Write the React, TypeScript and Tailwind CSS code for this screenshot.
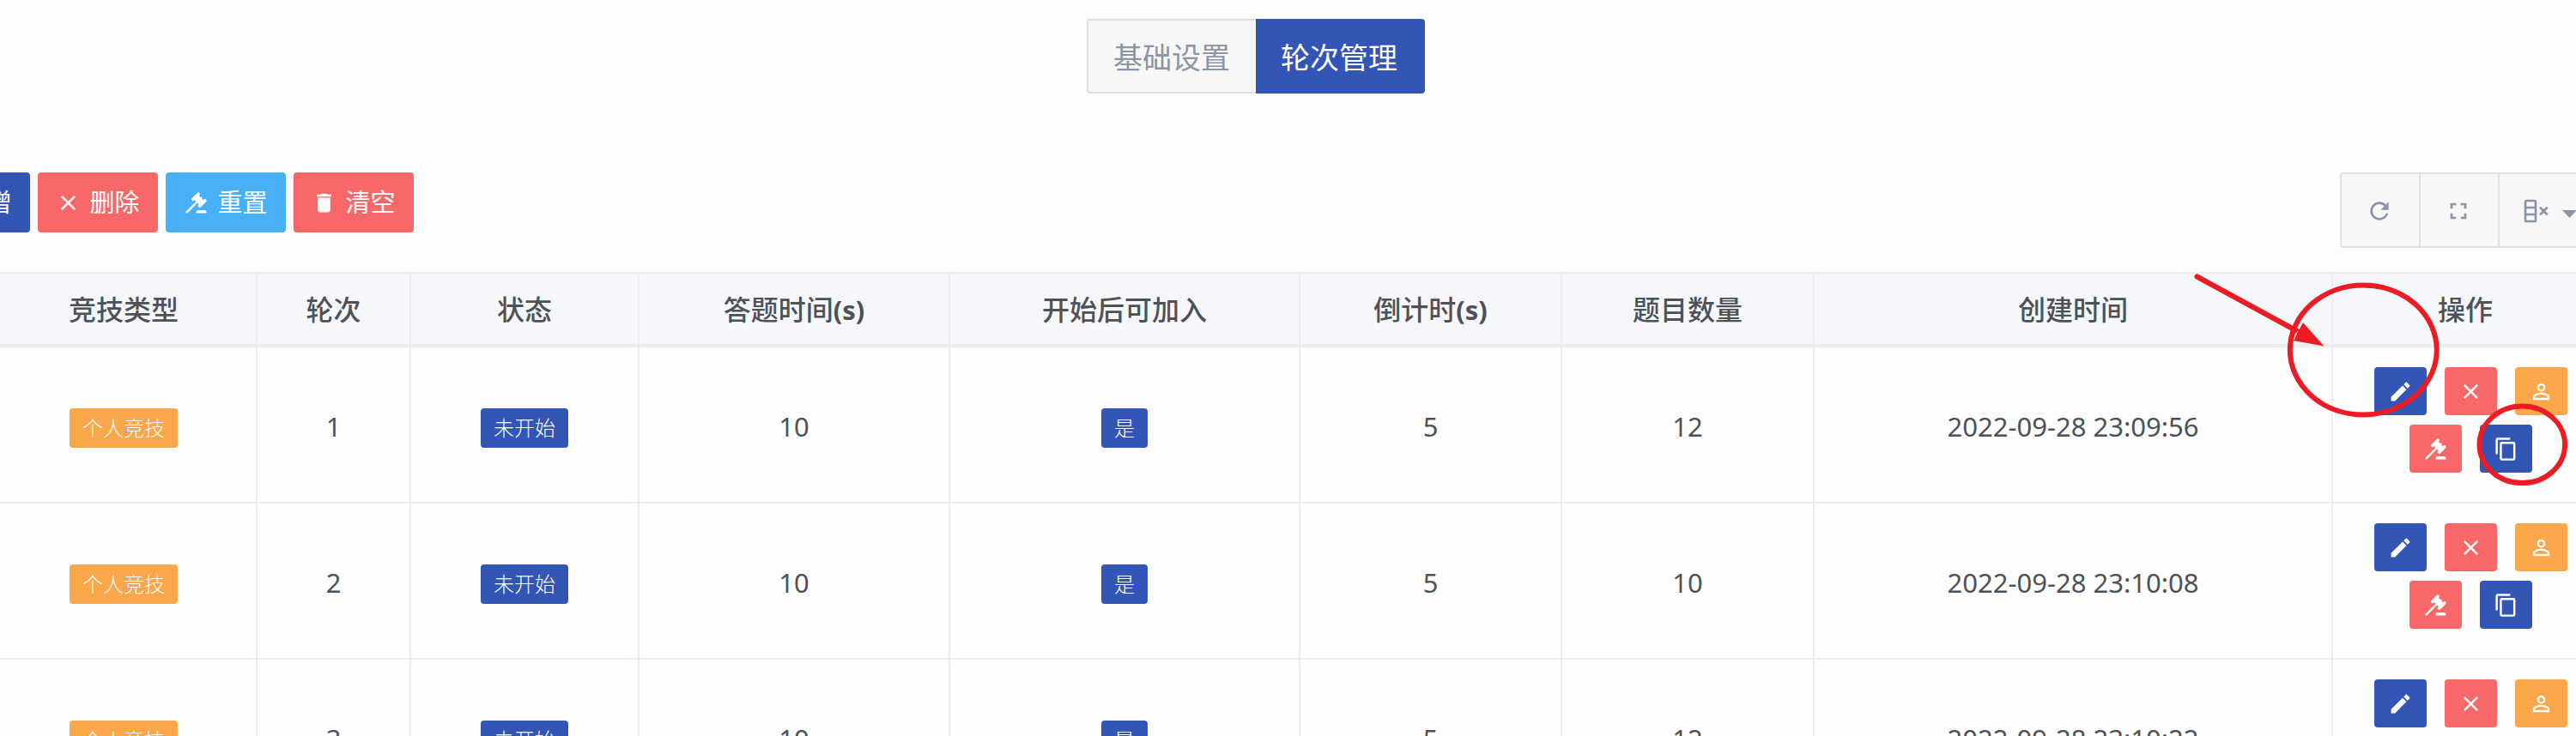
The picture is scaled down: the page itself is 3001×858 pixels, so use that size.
import { useState } from "react";

// icon paths (24x24)
const ICONS = {
  plus: "M19,13H13V19H11V13H5V11H11V5H13V11H19V13Z",
  close:
    "M19,6.41L17.59,5L12,10.59L6.41,5L5,6.41L10.59,12L5,17.59L6.41,19L12,13.41L17.59,19L19,17.59L13.41,12L19,6.41Z",
  gavel:
    "M2.3,20.28L11.9,10.68L10.5,9.26L9.78,9.97C9.39,10.36 8.76,10.36 8.37,9.97L7.66,9.26C7.27,8.87 7.27,8.24 7.66,7.85L13.32,2.19C13.71,1.8 14.34,1.8 14.73,2.19L15.44,2.9C15.83,3.29 15.83,3.92 15.44,4.31L14.73,5L16.15,6.43C16.54,6.04 17.17,6.04 17.56,6.43C17.95,6.82 17.95,7.46 17.56,7.85L18.97,9.26L19.68,8.55C20.07,8.16 20.71,8.16 21.1,8.55L21.8,9.26C22.19,9.65 22.19,10.29 21.8,10.68L16.15,16.33C15.76,16.72 15.12,16.72 14.73,16.33L14.03,15.63C13.63,15.24 13.63,14.6 14.03,14.21L14.73,13.5L13.32,12.09L3.71,21.7C3.32,22.09 2.69,22.09 2.3,21.7C1.91,21.31 1.91,20.67 2.3,20.28M20,19A2,2 0 0,1 22,21V22H12V21A2,2 0 0,1 14,19H20Z",
  trash: "M19,4H15.5L14.5,3H9.5L8.5,4H5V6H19M6,19A2,2 0 0,0 8,21H16A2,2 0 0,0 18,19V7H6V19Z",
  pencil:
    "M20.71,7.04C21.1,6.65 21.1,6 20.71,5.63L18.37,3.29C18,2.9 17.35,2.9 16.96,3.29L15.12,5.12L18.87,8.87M3,17.25V21H6.75L17.81,9.93L14.06,6.18L3,17.25Z",
  account:
    "M12,13C14.67,13 20,14.33 20,17V20H4V17C4,14.33 9.33,13 12,13M12,4A4,4 0 0,1 16,8A4,4 0 0,1 12,12A4,4 0 0,1 8,8A4,4 0 0,1 12,4M12,14.9C9.03,14.9 5.9,16.36 5.9,17V18.1H18.1V17C18.1,16.36 14.97,14.9 12,14.9M12,5.9A2.1,2.1 0 0,0 9.9,8A2.1,2.1 0 0,0 12,10.1A2.1,2.1 0 0,0 14.1,8A2.1,2.1 0 0,0 12,5.9Z",
  copy: "M19,21H8V7H19M19,5H8A2,2 0 0,0 6,7V21A2,2 0 0,0 8,23H19A2,2 0 0,0 21,21V7A2,2 0 0,0 19,5M16,1H4A2,2 0 0,0 2,3V17H4V3H16V1Z",
  refresh:
    "M17.65,6.35C16.2,4.9 14.21,4 12,4A8,8 0 0,0 4,12A8,8 0 0,0 12,20C15.73,20 18.84,17.45 19.73,14H17.65C16.83,16.33 14.61,18 12,18A6,6 0 0,1 6,12A6,6 0 0,1 12,6C13.66,6 15.14,6.69 16.22,7.78L13,11H20V4L17.65,6.35Z",
  fullscreen:
    "M5,5H10V7H7V10H5V5M14,5H19V10H17V7H14V5M17,14H19V19H14V17H17V14M10,17V19H5V14H7V17H10Z",
  columns:
    "M4,2H11A2,2 0 0,1 13,4V20A2,2 0 0,1 11,22H4A2,2 0 0,1 2,20V4A2,2 0 0,1 4,2M4,10V14H11V10H4M4,16V20H11V16H4M4,4V8H11V4H4M17.59,12L15,9.41L16.41,8L19,10.59L21.59,8L23,9.41L20.41,12L23,14.59L21.59,16L19,13.41L16.41,16L15,14.59L17.59,12Z",
};

type IconName = keyof typeof ICONS;

function Icon({ name, className }: { name: IconName; className: string }) {
  return (
    <svg viewBox="0 0 24 24" fill="currentColor" aria-hidden="true" className={className}>
      <path d={ICONS[name]} />
    </svg>
  );
}

const tabs = ["基础设置", "轮次管理"];

const tools: { label: string; icon: IconName; color: string }[] = [
  { label: "新增", icon: "plus", color: "bg-[#3355b5]" },
  { label: "删除", icon: "close", color: "bg-[#f96868]" },
  { label: "重置", icon: "gavel", color: "bg-[#48b0f7]" },
  { label: "清空", icon: "trash", color: "bg-[#f96868]" },
];

const actions: { label: string; icon: IconName; color: string }[] = [
  { label: "编辑", icon: "pencil", color: "bg-[#3355b5]" },
  { label: "删除", icon: "close", color: "bg-[#f96868]" },
  { label: "选手", icon: "account", color: "bg-[#faa64b]" },
  { label: "重置", icon: "gavel", color: "bg-[#f96868]" },
  { label: "复制", icon: "copy", color: "bg-[#3355b5]" },
];

const columns: { title: string; unit?: string; width: string }[] = [
  { title: "竞技类型", width: "w-[310px]" },
  { title: "轮次", width: "w-[179px]" },
  { title: "状态", width: "w-[266px]" },
  { title: "答题时间", unit: "(s)", width: "w-[362px]" },
  { title: "开始后可加入", width: "w-[408px]" },
  { title: "倒计时", unit: "(s)", width: "w-[305px]" },
  { title: "题目数量", width: "w-[294px]" },
  { title: "创建时间", width: "w-[604px]" },
  { title: "操作", width: "w-[308px]" },
];

const rounds = [
  { round: 1, answerTime: 10, countdown: 5, total: 12, createdAt: "2022-09-28 23:09:56" },
  { round: 2, answerTime: 10, countdown: 5, total: 10, createdAt: "2022-09-28 23:10:08" },
  { round: 3, answerTime: 10, countdown: 5, total: 12, createdAt: "2022-09-28 23:10:22" },
];

function Badge({ text, color }: { text: string; color: string }) {
  return (
    <span
      className={`mt-1 inline-block rounded px-[15px] py-[5px] align-middle text-2xl leading-9 font-light text-white ${color}`}
    >
      {text}
    </span>
  );
}

export default function App() {
  const [tab, setTab] = useState(1);

  const cell = "border-r-2 border-b-2 border-[#ebedee] px-0 pt-[3px] pb-0 text-center align-middle";

  return (
    <div className="relative h-screen overflow-hidden bg-[#fdfdfd] pt-[22px] font-['Noto_Sans','Noto_Sans_CJK_SC',sans-serif] text-[31px] leading-10 text-[#4d5259]">
      <div className="-mr-[25px] -ml-[105px]">

        {/* Tabs */}
        <div className="flex justify-center pl-1">
          {tabs.map((name, i) => (
            <button
              key={name}
              onClick={() => setTab(i)}
              className={`h-[87px] w-[197px] border-2 pt-0.5 text-[34px] first:rounded-l first:border-r-0 last:rounded-r last:border-l-0 ${
                tab === i
                  ? "border-[#3355b5] bg-[#3355b5] text-white"
                  : "border-[#e3dedf] bg-[#f7f7f7] text-[#8b95a5]"
              }`}
            >
              {name}
            </button>
          ))}
        </div>

        {/* Toolbar */}
        <div className="mt-[92px] flex items-start justify-between">
          <div className="flex gap-[9px]">
            {tools.map((t) => (
              <button
                key={t.label}
                className={`flex h-[70px] w-[140px] items-center justify-center gap-2.5 rounded text-[29px] text-white ${t.color}`}
              >
                <Icon name={t.icon} className="size-[29px]" />
                {t.label}
              </button>
            ))}
          </div>

          <div className="flex h-[88px] rounded border-2 border-[#e3dedf] bg-[#f7f7f7] text-[#8b95a5]">
            <button aria-label="刷新" className="border-r-2 border-[#e3dedf] pt-0.5 pr-[30px] pl-7">
              <Icon name="refresh" className="size-8" />
            </button>
            <button aria-label="全屏" className="border-r-2 border-[#e3dedf] pt-0.5 pr-[30px] pl-7">
              <Icon name="fullscreen" className="size-8" />
            </button>
            <button aria-label="列" className="flex items-center gap-[15px] pt-0.5 pr-[22px] pl-[26px]">
              <Icon name="columns" className="size-8" />
              <svg viewBox="0 0 17 9" fill="currentColor" aria-hidden="true" className="mt-1.5 h-[9px] w-[17px]">
                <path d="M0,0H17L8.5,9Z" />
              </svg>
            </button>
          </div>
        </div>

        {/* Table */}
        <div className="mt-7 ml-[95px]">
          <table className="w-full table-fixed border-separate border-spacing-0 border-t-2 border-[#ebedee]">
            <thead>
              <tr className="h-[86px] bg-[#f5f7fa]">
                {columns.map((c) => (
                  <th
                    key={c.title}
                    className={`border-r-2 border-b-4 border-[#ebedee] px-0 pt-0.5 pb-0 text-center text-[32px] font-medium last:border-r-0 ${c.width}`}
                  >
                    {c.title}
                    {c.unit && <span className="text-[31px] font-bold">{c.unit}</span>}
                  </th>
                ))}
              </tr>
            </thead>
            <tbody>
              {rounds.map((r) => (
                <tr key={r.round} className="h-[182px]">
                  <td className={cell}>
                    <Badge text="个人竞技" color="bg-[#faa64b]" />
                  </td>
                  <td className={cell}>{r.round}</td>
                  <td className={cell}>
                    <Badge text="未开始" color="bg-[#3355b5]" />
                  </td>
                  <td className={cell}>{r.answerTime}</td>
                  <td className={cell}>
                    <Badge text="是" color="bg-[#3355b5]" />
                  </td>
                  <td className={cell}>{r.countdown}</td>
                  <td className={cell}>{r.total}</td>
                  <td className={cell}>{r.createdAt}</td>
                  <td className="border-b-2 border-[#ebedee] p-0 align-middle">
                    <div className="flex flex-wrap justify-center gap-x-[21px] gap-y-[11px] pb-[11px] pl-3">
                      {actions.map((a) => (
                        <button
                          key={a.label}
                          aria-label={a.label}
                          className={`flex h-14 w-[61px] items-center justify-center rounded text-white ${a.color}`}
                        >
                          <Icon name={a.icon} className="size-[29px]" />
                        </button>
                      ))}
                    </div>
                  </td>
                </tr>
              ))}
            </tbody>
          </table>
        </div>
      </div>

      {/* Red marks over the action column */}
      <svg
        viewBox="0 0 451 260"
        fill="none"
        stroke="#ec1c24"
        strokeWidth="6"
        aria-hidden="true"
        className="pointer-events-none absolute top-[310px] right-0 h-[260px] w-[451px]"
      >
        <ellipse cx="203.3" cy="98" rx="85.5" ry="75.6" />
        <ellipse cx="388.3" cy="208.3" rx="49.8" ry="44.8" />
        <path d="M9.5,12.5L128,77" strokeLinecap="round" />
        <path d="M157.5,93.500L133,66L121.500,87Z" fill="#ec1c24" stroke="none" />
        <path d="M126.500,76L122.500,86" stroke="#f9c9cb" strokeWidth="1" />
      </svg>
    </div>
  );
}
